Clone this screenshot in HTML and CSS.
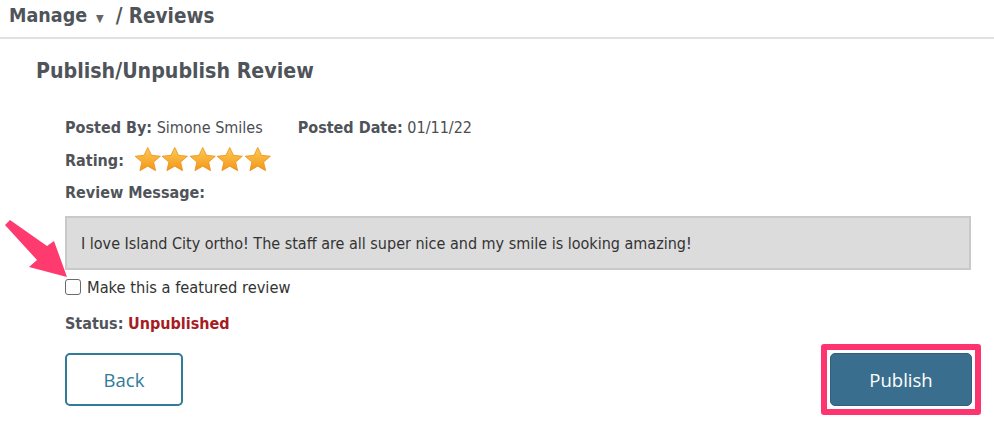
FILE: index.html
```html
<!DOCTYPE html>
<html>
<head>
<meta charset="utf-8">
<link rel="stylesheet" href="styles.css">
</head>
<body>
<div class="breadcrumb">
  <span class="crumb">Manage</span>
  <span class="caret">&#9660;</span>
  <span class="crumb">/ Reviews</span>
</div>
<div class="page">
  <h1 class="title">Publish/Unpublish Review</h1>
  <div class="details">
    <div class="row posted">
      <span class="field"><b>Posted By:</b> Simone Smiles</span>
      <span class="field"><b>Posted Date:</b> 01/11/22</span>
    </div>
    <div class="row rating">
      <b>Rating:</b>
      <span class="stars">
        <svg class="star" viewBox="0 0 28 28"><defs><linearGradient id="g" x1="0" y1="0" x2="0" y2="1"><stop offset="0" stop-color="#fdcb55"/><stop offset="1" stop-color="#f39619"/></linearGradient></defs><path d="M14 1.5l3.8 8 9 .9-6.8 6 2 8.7L14 20.5l-8 4.6 2-8.7-6.8-6 9-.9z" fill="url(#g)" stroke="#ea8e15" stroke-width="0.8" stroke-linejoin="round"/></svg>
        <svg class="star" viewBox="0 0 28 28"><path d="M14 1.5l3.8 8 9 .9-6.8 6 2 8.7L14 20.5l-8 4.6 2-8.7-6.8-6 9-.9z" fill="url(#g)" stroke="#ea8e15" stroke-width="0.8" stroke-linejoin="round"/></svg>
        <svg class="star" viewBox="0 0 28 28"><path d="M14 1.5l3.8 8 9 .9-6.8 6 2 8.7L14 20.5l-8 4.6 2-8.7-6.8-6 9-.9z" fill="url(#g)" stroke="#ea8e15" stroke-width="0.8" stroke-linejoin="round"/></svg>
        <svg class="star" viewBox="0 0 28 28"><path d="M14 1.5l3.8 8 9 .9-6.8 6 2 8.7L14 20.5l-8 4.6 2-8.7-6.8-6 9-.9z" fill="url(#g)" stroke="#ea8e15" stroke-width="0.8" stroke-linejoin="round"/></svg>
        <svg class="star" viewBox="0 0 28 28"><path d="M14 1.5l3.8 8 9 .9-6.8 6 2 8.7L14 20.5l-8 4.6 2-8.7-6.8-6 9-.9z" fill="url(#g)" stroke="#ea8e15" stroke-width="0.8" stroke-linejoin="round"/></svg>
      </span>
    </div>
    <div class="row message-label"><b>Review Message:</b></div>
    <div class="message">I love Island City ortho! The staff are all super nice and my smile is looking amazing!</div>
    <label class="featured"><span class="checkbox"></span>Make this a featured review</label>
    <div class="status"><b>Status:</b> <span class="unpub">Unpublished</span></div>
    <div class="actions">
      <button class="btn btn-back">Back</button>
      <div class="highlight"><button class="btn btn-publish">Publish</button></div>
    </div>
  </div>
</div>
<svg class="arrow" width="80" height="70" viewBox="0 0 80 70">
  <path d="M5 10 L10 5 L47 31 L54 26 L67 62 L29 52 L37 45 Z" fill="#fe3a6f"/>
</svg>
</body>
</html>
```

FILE: styles.css
```css
html, body {
  margin: 0;
  padding: 0;
  background: #fff;
}
body {
  font-family: "DejaVu Sans Condensed", "DejaVu Sans", sans-serif;
  color: #4a4e54;
  width: 994px;
  height: 430px;
  overflow: hidden;
  position: relative;
}
.breadcrumb {
  height: 31px;
  padding-bottom: 6px;
  border-bottom: 2px solid #e1e1e1;
  padding-left: 9px;
  display: flex;
  align-items: center;
  font-weight: bold;
  font-size: 19.5px;
  color: #4f545a;
}
.crumb + .caret + .crumb {
  font-size: 20.5px;
}
.caret {
  font-size: 11px;
  color: #666;
  margin: 6px 12px 0 9px;
}
.page {
  padding-left: 36px;
}
.title {
  margin: 0;
  padding-top: 19px;
  font-size: 21.2px;
  font-weight: bold;
  color: #4f545a;
  line-height: 26px;
}
.details {
  padding-left: 29px;
  padding-top: 33px;
  font-size: 16px;
  color: #4a4e54;
}
.details b {
  color: #50545a;
}
.row {
  display: flex;
  align-items: center;
  height: 20px;
}
.row.posted {
  gap: 35px;
}
.row.rating {
  gap: 10px;
  height: 28px;
  margin-top: 9px;
}
.row.message-label {
  margin-top: 8px;
}
.stars {
  display: flex;
}
.star {
  width: 27.5px;
  height: 27.5px;
  display: block;
}
.message {
  margin-top: 14px;
  width: 906px;
  height: 54px;
  box-sizing: border-box;
  background: #dcdcdc;
  border: 2px solid #c9c9c9;
  padding-left: 14px;
  display: flex;
  align-items: center;
  font-size: 16px;
  color: #333;
}
.featured {
  display: flex;
  align-items: center;
  margin-top: 8px;
  font-size: 16.3px;
  color: #333;
  height: 18px;
}
.checkbox {
  width: 14px;
  height: 14px;
  border: 1.5px solid #6b6b6b;
  border-radius: 3px;
  margin-right: 6px;
  background: #fff;
}
.status {
  margin-top: 19px;
  font-size: 16px;
  height: 18px;
  line-height: 18px;
}
.unpub {
  color: #a51c24;
  font-weight: bold;
}
.actions {
  margin-top: 11px;
  width: 916px;
  display: flex;
  justify-content: space-between;
  align-items: center;
}
.btn {
  font-family: "Open Sans", sans-serif;
  font-size: 18.5px;
  border-radius: 5px;
  cursor: pointer;
  height: 53px;
}
.btn-back {
  width: 118px;
  background: #fff;
  border: 2px solid #2f7b98;
  color: #2f7b98;
}
.highlight {
  border: 6px solid #fe3470;
  border-radius: 3px;
  padding: 3px;
  background: #fff;
}
.btn-publish {
  display: block;
  width: 142px;
  background: #3a6e8f;
  border: 1px solid #2e5f7c;
  color: #fff;
}
.arrow {
  position: absolute;
  left: 0;
  top: 215px;
}
```
